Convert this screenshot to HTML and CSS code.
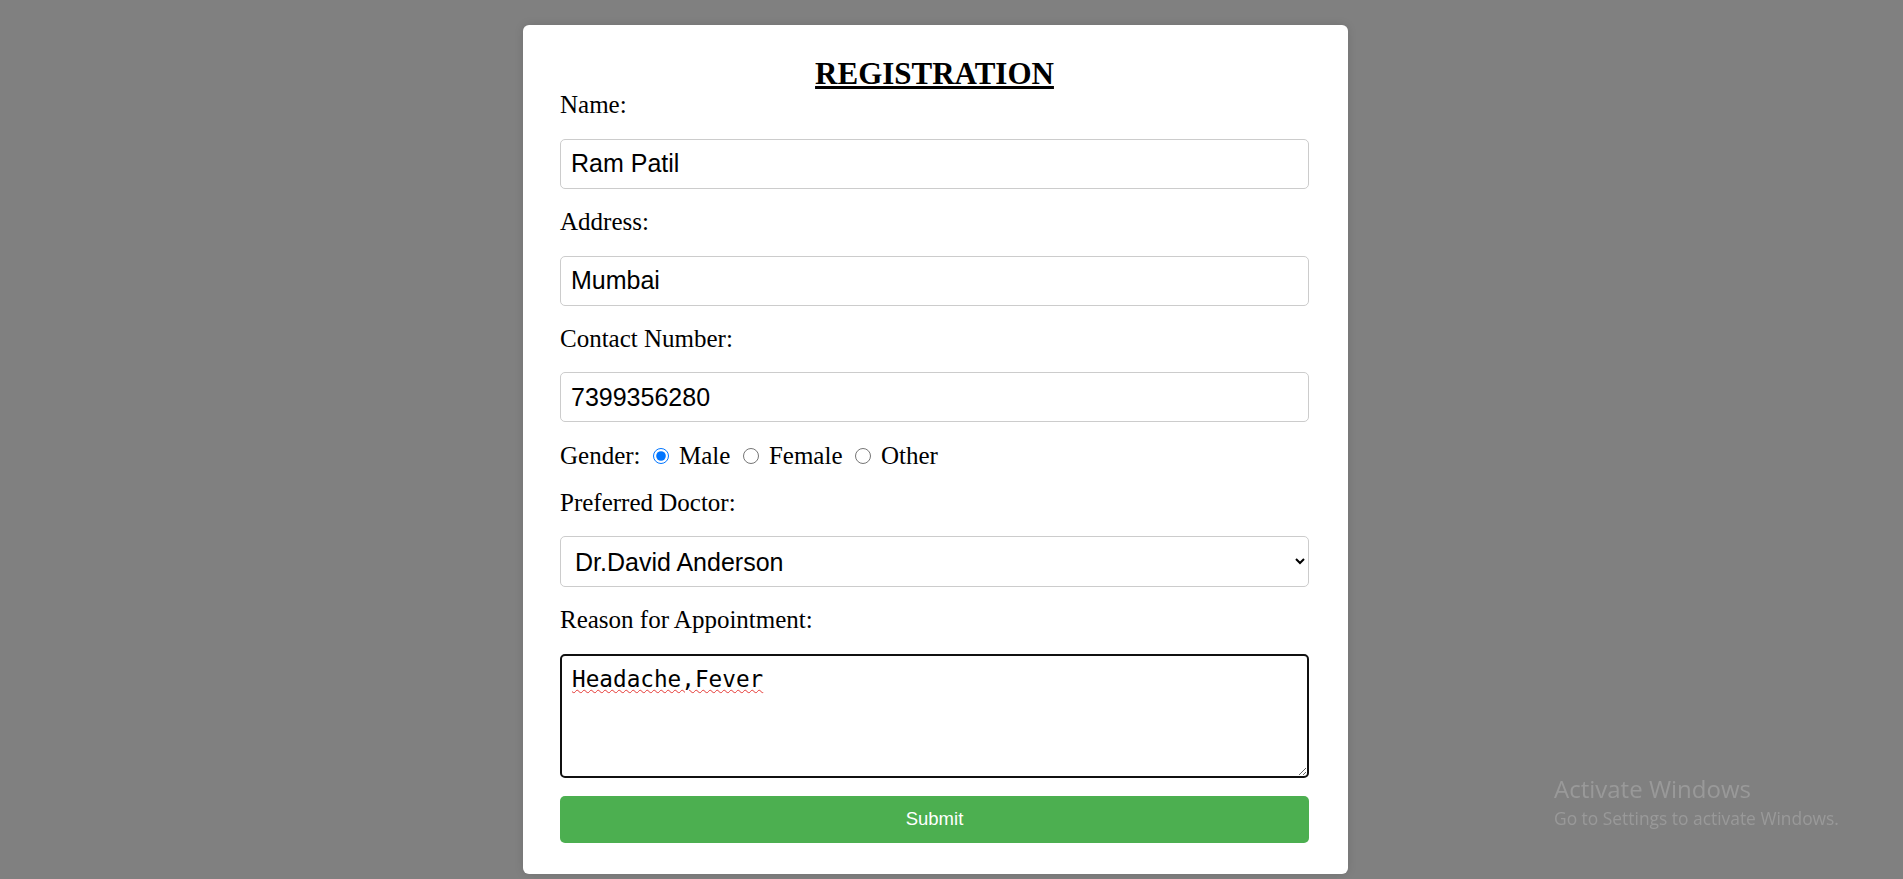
FILE: index.html
```html
<!DOCTYPE html>
<html lang="en">
<head>
<meta charset="utf-8">
<title>Registration</title>
<link rel="stylesheet" href="styles.css">
</head>
<body>
<main class="page">
  <form class="card">
    <h2 class="title">REGISTRATION</h2>
    <label class="label" for="name">Name:</label>
    <input class="field" id="name" type="text" value="Ram Patil">
    <label class="label" for="address">Address:</label>
    <input class="field" id="address" type="text" value="Mumbai">
    <label class="label" for="contact">Contact Number:</label>
    <input class="field" id="contact" type="text" value="7399356280">
    <div class="gender">Gender: <input class="radio" type="radio" name="g" id="m" checked> <label for="m">Male</label> <input class="radio" type="radio" name="g" id="f"> <label for="f">Female</label> <input class="radio" type="radio" name="g" id="o"> <label for="o">Other</label></div>
    <label class="label" for="doctor">Preferred Doctor:</label>
    <select class="field select" id="doctor">
      <option>Dr.David Anderson</option>
    </select>
    <label class="label" for="reason">Reason for Appointment:</label>
    <textarea class="area" id="reason" spellcheck="false">Headache,Fever</textarea>
    <button class="submit" type="button">Submit</button>
  </form>
</main>
<div class="watermark">
  <div class="wm-title">Activate Windows</div>
  <div class="wm-sub">Go to Settings to activate Windows.</div>
</div>
</body>
</html>
```
FILE: styles.css
```css
html, body {
  margin: 0;
  padding: 0;
}
body {
  background: #808080;
  font-family: "Liberation Serif", "Times New Roman", serif;
  height: 879px;
  overflow: hidden;
}
.page {
  display: flex;
  justify-content: center;
  padding-top: 25px;
  padding-right: 32px;
}
.card {
  box-sizing: border-box;
  width: 825px;
  background: #fff;
  border-radius: 6px;
  padding: 31px 39px 31px 37px;
  box-shadow: 0 0 10px rgba(0, 0, 0, 0.12);
  display: flex;
  flex-direction: column;
}
.title {
  margin: 0;
  text-align: center;
  font-size: 31px;
  line-height: 35px;
  font-weight: bold;
  text-decoration: underline;
  color: #000;
}
.label {
  display: block;
  font-size: 25px;
  line-height: 28.75px;
  color: #000;
  margin-bottom: 19px;
}
.field {
  box-sizing: border-box;
  width: 100%;
  height: 50px;
  margin: 0 0 19px 0;
  padding: 0 10px;
  border: 1px solid #ccc;
  border-radius: 5px;
  font-family: "Liberation Sans", Arial, sans-serif;
  font-size: 25px;
  color: #000;
  background: #fff;
}
.select {
  height: 50.5px;
  padding: 0 8px 0 10px;
}
.gender {
  font-size: 25px;
  line-height: 28.75px;
  height: 28.75px;
  padding-top: 1px;
  margin-bottom: 17.5px;
  color: #000;
}
.radio {
  width: 16px;
  height: 16px;
  margin: 3.75px 3.75px 0 6.25px;
  accent-color: #0075ff;
}
.area {
  box-sizing: border-box;
  width: 100%;
  height: 124px;
  margin: 0 0 18px 0;
  padding: 10px 10px 10px 10px;
  border: 2px solid #101010;
  border-radius: 5px;
  font-family: "DejaVu Sans Mono", "Liberation Mono", monospace;
  font-size: 22.7px;
  line-height: 26px;
  color: #000;
  text-decoration: underline wavy #e53935;
  text-decoration-thickness: 1px;
  text-underline-offset: 2px;
  outline: none;
}
.submit {
  width: 100%;
  height: 47px;
  border: none;
  border-radius: 5px;
  background: #4caf50;
  color: #fff;
  font-family: "Liberation Sans", Arial, sans-serif;
  font-size: 18.5px;
  padding: 0;
}
.watermark {
  position: fixed;
  left: 1554px;
  top: 773px;
  color: #999999;
  font-family: "Open Sans", "Noto Sans", sans-serif;
}
.wm-title {
  font-size: 24px;
  line-height: 32px;
}
.wm-sub {
  font-size: 17.4px;
  line-height: 26px;
}
```
